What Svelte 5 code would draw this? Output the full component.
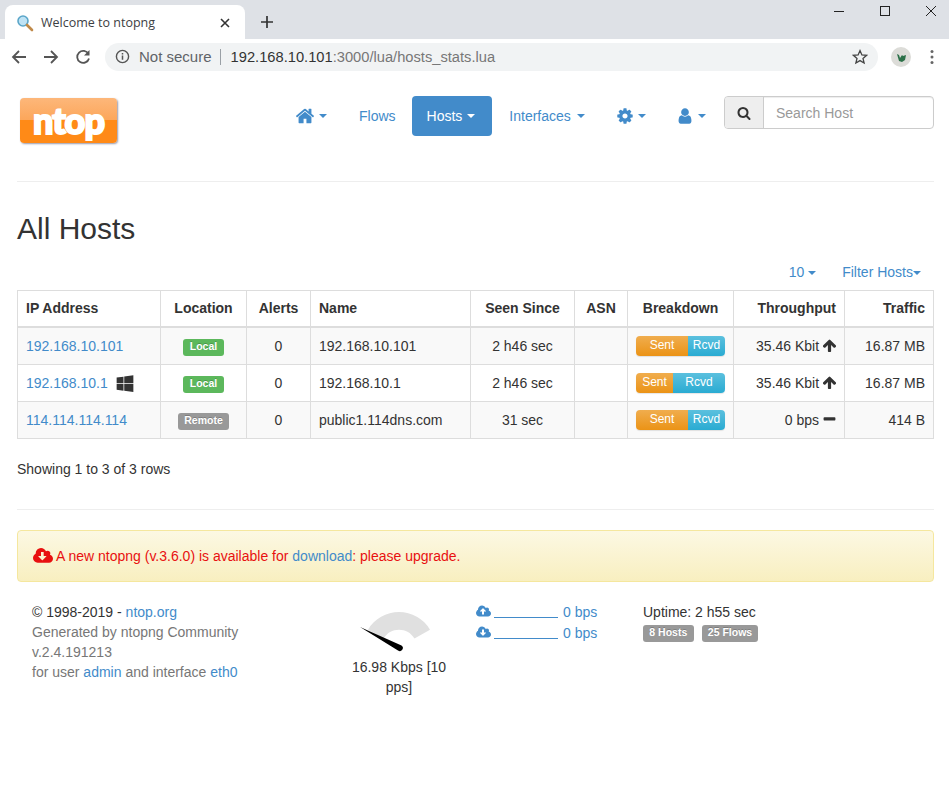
<script>
  const P = {
    home: 'M1472 992v480q0 26-19 45t-45 19h-384v-384h-256v384h-384q-26 0-45-19t-19-45v-480q0-1 .5-3t.5-3l575-474 575 474q1 2 1 6zm223-69l-62 74q-8 9-21 11h-3q-13 0-21-7l-692-577-692 577q-12 8-24 7-13-2-21-11l-62-74q-8-10-7-23.5t11-21.5l719-599q32-26 76-26t76 26l244 204v-195q0-14 9-23t23-9h192q14 0 23 9t9 23v408l219 182q10 8 11 21.5t-7 23.5z',
    cog: 'M1152 896q0-106-75-181t-181-75-181 75-75 181 75 181 181 75 181-75 75-181zm512-109v222q0 12-8 23t-20 13l-185 28q-19 54-39 91 35 50 107 138 10 12 10 25t-9 23q-27 37-99 108t-94 71q-12 0-26-9l-138-108q-44 23-91 38-16 136-29 186-7 28-36 28h-222q-14 0-24.5-8.5t-11.5-21.5l-28-184q-49-16-90-37l-141 107q-10 9-25 9-14 0-25-11-126-114-165-168-7-10-7-23 0-12 8-23 15-21 51-66.5t54-70.5q-27-50-41-99l-183-27q-13-2-21-12.5t-8-23.5v-222q0-12 8-23t19-13l186-28q14-46 39-92-40-57-107-138-10-12-10-24 0-10 9-23 26-36 98.5-107.5t94.5-71.5q13 0 26 10l138 107q44-23 91-38 16-136 29-186 7-28 36-28h222q14 0 24.5 8.5t11.5 21.5l28 184q49 16 90 37l142-107q9-9 24-9 13 0 25 10 129 119 165 170 7 8 7 22 0 12-8 23-15 21-51 66.5t-54 70.5q26 50 41 98l183 28q13 2 21 12.5t8 23.5z',
    user: 'M1536 1399q0 109-62.5 187t-150.5 78h-854q-88 0-150.5-78t-62.5-187q0-85 8.5-160.5t31.5-152 58.5-131 94-89 134.5-34.5q131 128 313 128t313-128q76 0 134.5 34.5t94 89 58.5 131 31.5 152 8.5 160.5zm-256-887q0 159-112.5 271.5t-271.5 112.5-271.5-112.5-112.5-271.5 112.5-271.5 271.5-112.5 271.5 112.5 112.5 271.5z',
    search: 'M1216 832q0-185-131.5-316.5t-316.5-131.5-316.5 131.5-131.5 316.5 131.5 316.5 316.5 131.5 316.5-131.5 131.5-316.5zm512 832q0 52-38 90t-90 38q-54 0-90-38l-343-342q-179 124-399 124-143 0-273.5-55.5t-225-150-150-225-55.5-273.5 55.5-273.5 150-225 225-150 273.5-55.5 273.5 55.5 225 150 150 225 55.5 273.5q0 220-124 399l343 343q37 37 37 90z',
    down: 'M1280 928q0-14-9-23t-23-9h-224v-352q0-13-9.5-22.5t-22.5-9.5h-192q-13 0-22.5 9.5t-9.5 22.5v352h-224q-13 0-22.5 9.5t-9.5 22.5q0 14 9 23l352 352q9 9 23 9t23-9l351-351q10-12 10-24zm640 224q0 159-112.5 271.5t-271.5 112.5h-1088q-185 0-316.5-131.5t-131.5-316.5q0-130 70-240t188-165q-2-30-2-43 0-212 150-362t362-150q156 0 285.5 87t188.5 231q71-62 166-62 106 0 181 75t75 181q0 76-41 138 130 31 213.5 135.5t83.5 238.5z',
    up: 'M1280 864q0-14-9-23l-352-352q-9-9-23-9t-23 9l-351 351q-10 12-10 24 0 14 9 23t23 9h224v352q0 13 9.5 22.5t22.5 9.5h192q13 0 22.5-9.5t9.5-22.5v-352h224q13 0 22.5-9.5t9.5-22.5zm640 288q0 159-112.5 271.5t-271.5 112.5h-1088q-185 0-316.5-131.5t-131.5-316.5q0-130 70-240t188-165q-2-30-2-43 0-212 150-362t362-150q156 0 285.5 87t188.5 231q71-62 166-62 106 0 181 75t75 181q0 76-41 138 130 31 213.5 135.5t83.5 238.5z',
    arrow: 'M1675 971q0 51-37 90l-75 75q-38 38-91 38-54 0-90-38l-294-293v704q0 52-37.5 84.5t-90.5 32.5h-128q-53 0-90.5-32.5t-37.5-84.5v-704l-294 293q-36 38-90 38t-90-38l-75-75q-38-38-38-90 0-53 38-91l651-651q35-37 90-37 54 0 91 37l651 651q37 39 37 91z',
    minus: 'M1600 736v192q0 40-28 68t-68 28h-1216q-40 0-68-28t-28-68v-192q0-40 28-68t68-28h1216q40 0 68 28t28 68z',
    windows: 'M746 1006v651l-682-94v-557h682zm0-743v659h-682v-565zm982 743v786l-907-125v-661h907zm0-878v794h-907v-669z'
  };
  const rows = [
    { ip: '192.168.10.101', win: false, loc: 'Local', name: '192.168.10.101', seen: '2 h46 sec', sent: 52, thr: '35.46 Kbit', dir: 'arrow', traffic: '16.87 MB' },
    { ip: '192.168.10.1', win: true, loc: 'Local', name: '192.168.10.1', seen: '2 h46 sec', sent: 37, thr: '35.46 Kbit', dir: 'arrow', traffic: '16.87 MB' },
    { ip: '114.114.114.114', win: false, loc: 'Remote', name: 'public1.114dns.com', seen: '31 sec', sent: 52, thr: '0 bps', dir: 'minus', traffic: '414 B' }
  ];
</script>

<div class="chrome">
  <div class="strip">
    <div class="tab">
      <svg class="favicon" viewBox="0 0 18 18" width="18" height="18">
        <circle cx="7" cy="7" r="5" fill="#bfe3f5" stroke="#5ba6c9" stroke-width="1.6"/>
        <path d="M11 11l5 5" stroke="#c08a4a" stroke-width="2.6" stroke-linecap="round"/>
      </svg>
      <span class="tabtitle">Welcome to ntopng</span>
      <svg class="tabx" viewBox="0 0 10 10" width="10" height="10"><path d="M1 1l8 8M9 1l-8 8" stroke="#333" stroke-width="1.6"/></svg>
    </div>
    <svg class="plus" viewBox="0 0 12 12" width="12" height="12"><path d="M6 0v12M0 6h12" stroke="#333" stroke-width="1.7"/></svg>
    <div class="winctl">
      <svg viewBox="0 0 10 10" width="10" height="10"><path d="M0 5.5h10" stroke="#222" stroke-width="1"/></svg>
      <svg viewBox="0 0 10 10" width="10" height="10"><rect x=".5" y=".5" width="9" height="9" fill="none" stroke="#222"/></svg>
      <svg viewBox="0 0 10 10" width="10" height="10"><path d="M0 0l10 10M10 0L0 10" stroke="#222" stroke-width="1"/></svg>
    </div>
  </div>
  <div class="toolbar">
    <svg viewBox="0 0 16 16" width="16" height="16"><path d="M15 8H2M8 2L2 8l6 6" fill="none" stroke="#555" stroke-width="1.8"/></svg>
    <svg viewBox="0 0 16 16" width="16" height="16"><path d="M1 8h13M8 2l6 6-6 6" fill="none" stroke="#555" stroke-width="1.8"/></svg>
    <svg viewBox="0 0 16 16" width="16" height="16"><path d="M13.5 5A6 6 0 1 0 14 9.5" fill="none" stroke="#555" stroke-width="1.8"/><path d="M14.5 1v5.5H9z" fill="#555"/></svg>
    <div class="omni">
      <svg class="info" viewBox="0 0 16 16" width="15" height="15"><circle cx="8" cy="8" r="6.5" fill="none" stroke="#555" stroke-width="1.5"/><path d="M8 7v4.5M8 4.2v1.6" stroke="#555" stroke-width="1.6"/></svg>
      <span class="ns">Not secure</span>
      <span class="sep"></span>
      <span class="url">192.168.10.101<span class="urlrest">:3000/lua/hosts_stats.lua</span></span>
      <svg class="star" viewBox="0 0 16 16" width="16" height="16"><path d="M8 1.6l1.9 4.3 4.7.4-3.6 3.1 1.1 4.6L8 11.6l-4.1 2.4L5 9.400 1.400 6.300l4.700-.4z" fill="none" stroke="#444" stroke-width="1.300"/></svg>
    </div>
    <svg class="avatar" viewBox="0 0 20 20" width="20" height="20">
      <circle cx="10" cy="10" r="10" fill="#dcdcd8"/>
      <path d="M6 7l2 1 1 3 2-3 1 1 3-1-1 5-3 2-3-1z" fill="#2c7048"/>
    </svg>
    <svg class="dots" viewBox="0 0 4 16" width="4" height="16"><circle cx="2" cy="2.500" r="1.500" fill="#666"/><circle cx="2" cy="8" r="1.500" fill="#666"/><circle cx="2" cy="13.500" r="1.500" fill="#666"/></svg>
  </div>
</div>

<div class="page">
  <header class="top">
    <div class="logo"><span>ntop</span></div>
    <nav class="pills">
      <a class="pill p-home" href="#h"><svg viewBox="0 0 1792 1792" width="20" height="20"><path d={P.home}/></svg><i class="caret"></i></a>
      <a class="pill p-flows" href="#f">Flows</a>
      <a class="pill p-hosts active" href="#o">Hosts<i class="caret"></i></a>
      <a class="pill p-if" href="#i">Interfaces<i class="caret"></i></a>
      <a class="pill p-cog" href="#c"><svg viewBox="0 0 1792 1792" width="18" height="18"><path d={P.cog}/></svg><i class="caret"></i></a>
      <a class="pill p-user" href="#u"><svg viewBox="0 0 1792 1792" width="18" height="18"><path d={P.user}/></svg><i class="caret"></i></a>
    </nav>
    <div class="search">
      <span class="addon"><svg viewBox="0 0 1792 1792" width="14" height="14"><path d={P.search}/></svg></span>
      <span class="placeholder">Search Host</span>
    </div>
  </header>

  <hr class="rule first" />
  <h1>All Hosts</h1>

  <div class="tools">
    <a href="#n">10 <i class="caret"></i></a>
    <a href="#x">Filter Hosts<i class="caret"></i></a>
  </div>

  <table>
    <colgroup>
      <col style="width:143px"/><col style="width:86px"/><col style="width:64px"/><col style="width:160px"/><col style="width:104px"/><col style="width:53px"/><col style="width:106px"/><col style="width:111px"/><col style="width:89px"/>
    </colgroup>
    <thead>
      <tr>
        <th>IP Address</th><th class="c">Location</th><th class="c">Alerts</th><th>Name</th><th class="c">Seen Since</th><th class="c">ASN</th><th class="c">Breakdown</th><th class="r">Throughput</th><th class="r">Traffic</th>
      </tr>
    </thead>
    <tbody>
      {#each rows as row}
        <tr>
          <td><a href="#r">{row.ip}</a>{#if row.win}<svg class="win" viewBox="0 0 1792 1792" width="18" height="18"><path d={P.windows}/></svg>{/if}</td>
          <td class="c"><span class="label" class:success={row.loc === 'Local'}>{row.loc}</span></td>
          <td class="c">0</td>
          <td>{row.name}</td>
          <td class="c">{row.seen}</td>
          <td></td>
          <td class="c">
            <div class="progress">
              <div class="bar sent" style={`width:${row.sent}px`}>Sent</div>
              <div class="bar rcvd">Rcvd</div>
            </div>
          </td>
          <td class="r thr">{row.thr} <svg viewBox="0 0 1792 1792" width="15" height="15"><path d={P[row.dir]}/></svg></td>
          <td class="r">{row.traffic}</td>
        </tr>
      {/each}
    </tbody>
  </table>

  <p class="showing">Showing 1 to 3 of 3 rows</p>
  <hr class="rule second" />

  <div class="alert">
    <svg viewBox="0 0 1920 1792" width="20" height="20"><path d={P.down}/></svg><span>A new ntopng (v.3.6.0) is available for <a href="#d">download</a>: please upgrade.</span>
  </div>

  <footer class="foot">
    <div class="about">
      <div class="dark">© 1998-2019 - <a href="#t">ntop.org</a></div>
      <div>Generated by ntopng Community</div>
      <div>v.2.4.191213</div>
      <div>for user <a href="#a">admin</a> and interface <a href="#e">eth0</a></div>
    </div>
    <div class="gauge">
      <svg viewBox="0 0 100 52" width="100" height="52">
        <path d="M19 26.700A36 36 0 0 1 81 26.700L65.500 35.600A18 18 0 0 0 34.500 35.600Z" fill="#e0e0e0"/>
        <path d="M11 24L52.500 42.500A3 3 0 0 1 49 47.500Z" fill="#000"/>
      </svg>
      <div class="gtext">16.98 Kbps [10 pps]</div>
    </div>
    <div class="rates">
      <div class="rate"><svg viewBox="0 0 1920 1792" width="15" height="15"><path d={P.up}/></svg><span class="spark"></span><a href="#1">0 bps</a></div>
      <div class="rate"><svg viewBox="0 0 1920 1792" width="15" height="15"><path d={P.down}/></svg><span class="spark"></span><a href="#2">0 bps</a></div>
    </div>
    <div class="uptime">
      <div>Uptime: 2 h55 sec</div>
      <div class="badges"><span class="label">8 Hosts</span><span class="label">25 Flows</span></div>
    </div>
  </footer>
</div>

<style>
  :global(body) { margin: 0; background: #fff; font-family: "Liberation Sans", Arial, sans-serif; font-size: 14px; line-height: 20px; color: #333; }
  a { color: #428bca; text-decoration: none; }
  .chrome { height: 74px; display: flex; flex-direction: column; font-family: "Open Sans", "Noto Sans", sans-serif; }
  .strip { height: 39px; background: #dee1e6; display: flex; align-items: flex-end; padding-left: 5px; }
  .tab { width: 240px; height: 34px; box-sizing: border-box; background: #fff; border-radius: 8px 8px 0 0; display: flex; align-items: center; padding: 2px 15px 0 11px; }
  .tabtitle { font-size: 12.500px; color: #3c4043; margin-left: 7px; flex: 1; white-space: nowrap; }
  .plus { margin: 0 0 11px 16px; }
  .winctl { margin-left: auto; align-self: flex-start; display: flex; gap: 36px; padding: 6px 13px 0 0; }
  .toolbar { flex: 1; display: flex; align-items: center; padding: 0 8px 0 11px; gap: 16px; }
  .omni { width: 773px; height: 28px; margin-left: -2px; box-sizing: border-box; background: #f1f3f4; border-radius: 14px; display: flex; align-items: center; padding: 0 10px 0 10px; font-family: "Liberation Sans", sans-serif; }
  .ns { margin-left: 9px; color: #5f6368; font-size: 15px; }
  .sep { width: 1px; height: 16px; background: #9aa0a6; margin: 0 10px 0 8px; }
  .url { color: #333; font-size: 14.700px; white-space: nowrap; }
  .urlrest { color: #777; }
  .star { margin-left: auto; }
  .avatar { margin-left: -3px; }
  .dots { margin-left: 3px; }

  .page { padding: 0 15px 0 17px; }
  .top { height: 107px; display: flex; align-items: flex-start; }
  .logo { margin: 24px 0 0 3px; width: 97px; height: 45px; box-sizing: border-box; border-radius: 4px; background: linear-gradient(#fdb77a 0, #fca65a 50%, #ff8a17 50%, #ff8a17 100%); box-shadow: 1px 1px 2px #99a; display: flex; align-items: center; justify-content: center; }
  .logo span { color: #fff; font: 900 36px/1 Lato, sans-serif; letter-spacing: -1px; -webkit-text-stroke: 2px #fff; paint-order: stroke; position: relative; top: -1px; }
  .pills { display: flex; margin: 22px 0 0 167px; }
  .pill { height: 40px; box-sizing: border-box; padding: 10px 15px; border-radius: 4px; display: flex; align-items: center; color: #428bca; white-space: pre; }
  .pill svg { fill: #428bca; }
  .pill.active { background: #428bca; color: #fff; }
  .pill .caret { margin-left: 5px; }
  .p-home { padding-left: 11px; padding-right: 17px; }
  .pill.p-home .caret, .pill.p-cog .caret, .pill.p-user .caret { margin-left: 4px; }
  .p-flows { padding-left: 15px; padding-right: 16px; }
  .p-hosts { padding-right: 17px; }
  .p-if { padding-left: 17px; }
  .pill.p-if .caret { margin-left: 6px; }
  .p-cog { padding: 10px 16px; }
  .p-user { padding: 10px 16px; margin-left: -2px; }
  .caret { display: inline-block; width: 0; height: 0; border-top: 4px solid; border-left: 4px solid transparent; border-right: 4px solid transparent; vertical-align: middle; }
  .search { display: flex; width: 210px; height: 33px; margin: 22px 0 0 auto; box-sizing: border-box; border: 1px solid #ccc; border-radius: 4px; box-shadow: inset 0 1px 1px rgba(0,0,0,.075); }
  .addon { width: 38px; background: #eee; border-right: 1px solid #ccc; display: flex; align-items: center; justify-content: center; border-radius: 3px 0 0 3px; }
  .addon svg { fill: #333; }
  .placeholder { color: #999; padding: 6px 12px 4px; }
  .rule { border: 0; border-top: 1px solid #eee; margin: 0; }
  h1 { font-size: 30px; font-weight: 400; line-height: 33px; margin: 30px 0 0; }
  .tools { display: flex; justify-content: flex-end; gap: 26px; padding: 17px 13px 0 0; height: 20px; margin-bottom: 8px; }
  table { border-collapse: collapse; table-layout: fixed; width: 917px; }
  th, td { border: 1px solid #ddd; padding: 8px; text-align: left; height: 20px; vertical-align: top; white-space: nowrap; overflow: hidden; }
  th { border-bottom-width: 2px; font-weight: 700; padding-top: 7px; padding-bottom: 8px; }
  tbody tr:nth-child(odd) td { background: #f9f9f9; }
  .c { text-align: center; }
  .r { text-align: right; }
  .win { fill: #333; vertical-align: -4px; margin-left: 8px; }
  .label { display: inline-block; font-size: 10.500px; font-weight: 700; line-height: 1; color: #fff; background: #999; padding: 2px 6.300px 4px; border-radius: 3px; vertical-align: 1px; text-shadow: 0 -1px 0 rgba(0,0,0,.2); }
  .label.success { background: #5cb85c; }
  .progress { display: flex; height: 20px; border-radius: 4px; overflow: hidden; width: 89px; font-size: 12px; color: #fff; box-shadow: 0 1px 1px rgba(0,0,0,.1); }
  .bar { text-align: center; line-height: 19px; }
  .sent { background: linear-gradient(#f0ad4e, #eb9316); }
  .rcvd { flex: 1; background: linear-gradient(#5bc0de, #2aabd2); }
  .thr svg { fill: #333; vertical-align: -2px; margin: 0 -1px; }
  .showing { margin: 20px 0 0; height: 20px; }
  .second { margin-top: 30px; }
  .alert { margin-top: 20px; width: 917px; height: 52px; box-sizing: border-box; border: 1px solid #f5e79e; border-radius: 4px; background: linear-gradient(#fcf8e3, #f8efc0); padding: 15px; color: #e81010; display: flex; align-items: center; }
  .alert svg { fill: #e81010; margin-right: 3px; }
  .foot { display: grid; grid-template-columns: 332px 112px 167px 1fr; margin-top: 20px; padding-left: 15px; }
  .about { color: #777; }
  .about .dark { color: #333; }
  .gauge { margin-left: -15px; width: 100px; text-align: center; }
  .gauge svg { display: block; margin-top: 1px; }
  .gtext { margin-top: 2px; }
  .rates { margin-top: -1px; }
  .rate { display: flex; align-items: center; height: 21px; }
  .rate svg { fill: #428bca; }
  .spark { width: 64px; height: 12px; border-bottom: 1px solid #428bca; margin: 0 5px 0 3px; }
  .badges { display: flex; gap: 8px; margin-top: 3px; }
</style>
